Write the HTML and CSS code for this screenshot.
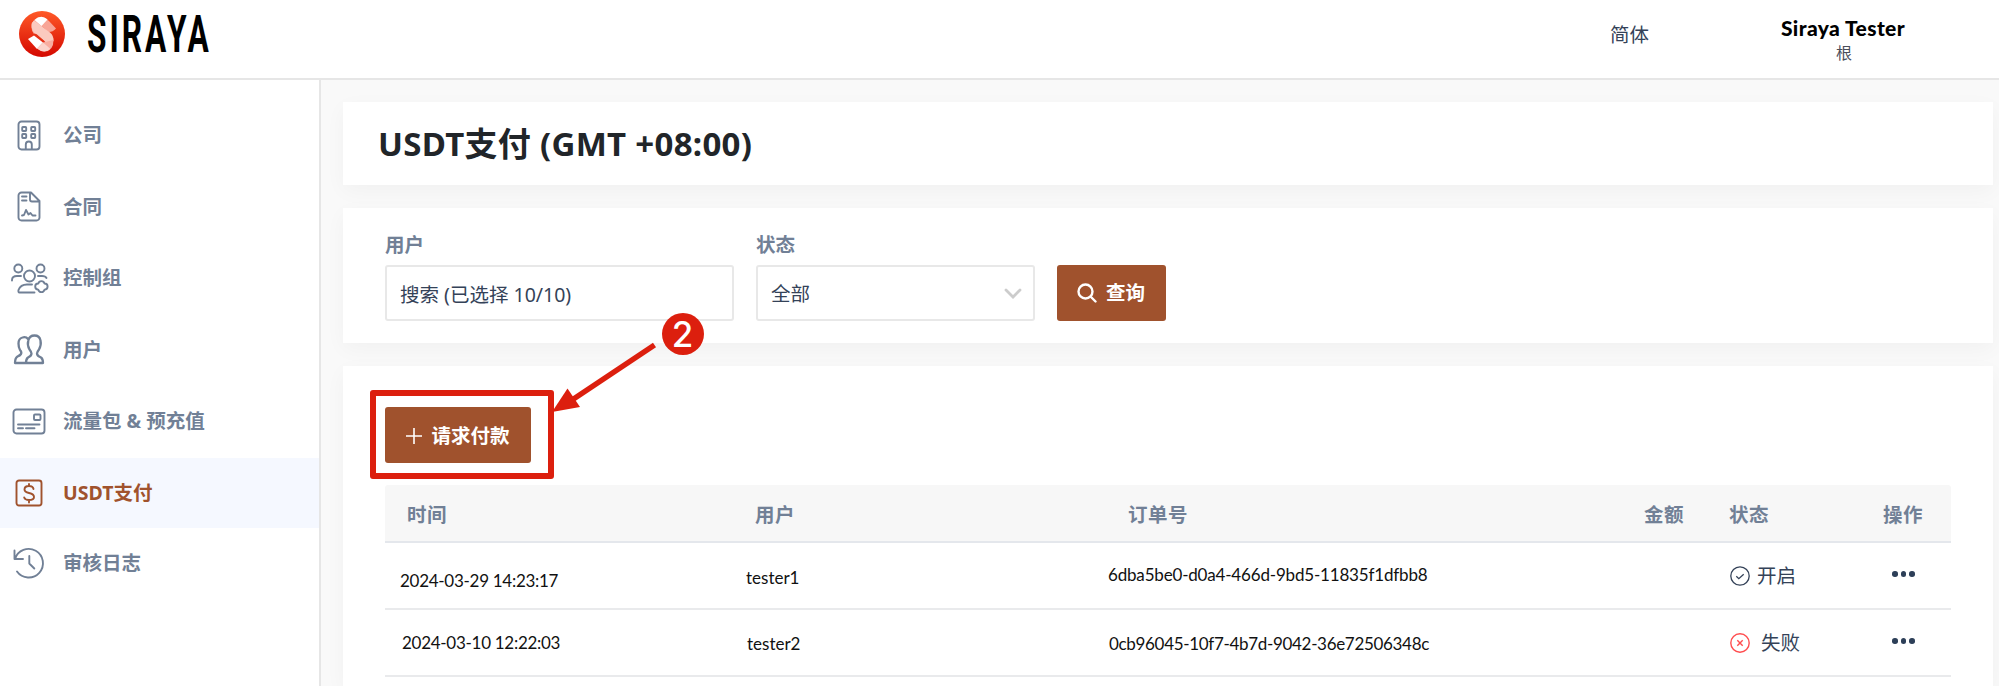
FILE: index.html
```html
<!DOCTYPE html>
<html lang="zh-CN">
<head>
<meta charset="utf-8">
<title>USDT支付</title>
<link rel="stylesheet" href="styles.css">
</head>
<body>
<header class="topbar">
  <div class="brand">
    <svg class="brand-mark" width="46" height="46" viewBox="0 0 46 46">
      <defs><linearGradient id="g" x1="0" y1="0" x2="0" y2="1"><stop offset="0" stop-color="#ff5a28"/><stop offset="1" stop-color="#d40800"/></linearGradient></defs>
      <circle cx="23" cy="23" r="23" fill="url(#g)"/>
      <path d="M15 23Q10 16 14.500 10Q18 5.500 23 6Q27 6.500 30 10L37 17.500Q34 21 29.500 21L23 15.500Z" fill="#f8a596"/>
      <path d="M15.500 9Q22 3 28.500 8.500L22.500 15L15.500 9Z" fill="#fff"/>
      <path d="M12.500 14Q12.500 21 18 24L30 34L34.500 30Q35 25 31 21.500L23 15.500L15 9.500Q12.500 11.500 12.500 14Z" fill="#fbcabf"/>
      <path d="M9 28L15 24.500L24 31.500L18 38Z" fill="#fff"/>
      <path d="M24 31.500L34.500 29Q34.500 40 25.500 40.500Q21.500 40.500 18 37.500Z" fill="#f8ada0"/>
      <path d="M24 31.500L31.500 38Q25 43 18 37.500Z" fill="#fbd3cb"/>
      <path d="M17 23.500L25 30.500" stroke="#e73516" stroke-width="1.200"/>
    </svg>
    <span class="brand-name">SIRAYA</span>
  </div>
  <div class="lang">简体</div>
  <div class="account"><div class="account-name">Siraya Tester</div><div class="account-role">根</div></div>
</header>
<div class="body">
  <nav class="sidebar">
    <a class="item"><span class="ico"><svg width="24" height="31" viewBox="0 0 24 31"><rect x="1.500" y="1.500" width="21" height="28" rx="3"/><rect x="5.200" y="7" width="4" height="4" rx=".7"/><rect x="14.200" y="7" width="4" height="4" rx=".7"/><rect x="5.200" y="14" width="4" height="4" rx=".7"/><rect x="14.200" y="14" width="4" height="4" rx=".7"/><path d="M8.800 29v-4.500a3 3 0 0 1 6 0V29"/></svg></span>公司</a>
    <a class="item"><span class="ico"><svg width="24" height="31" viewBox="0 0 24 31"><path d="M4.500 1.500H14l8.500 8.500v16.500a3 3 0 0 1-3 3h-15a3 3 0 0 1-3-3v-22a3 3 0 0 1 3-3ZM13 1.500v7q0 2 2 2h7.500M5 5.500h4.500M5 9.500h4.500M5 24.500l2-.500 2-5 2.500 4.500 2-1.500 2 2.500h3"/></svg></span>合同</a>
    <a class="item"><span class="ico"><svg width="38" height="31" viewBox="0 0 38 31"><circle cx="8.300" cy="5.500" r="4"/><circle cx="30.500" cy="5.500" r="4"/><circle cx="19.500" cy="13" r="5.500"/><path d="M2 17.500v-.500q0-4 5-4h4M28 13h4q3.500 0 4.500 2M24.500 29.500H9.500q-1.500 0-1-2.500Q10.500 21.500 17 21.500h5M28.300 20.500a3.200 3.200 0 0 1 6.200 0 3.100 3.100 0 0 1 0 6.200 3.200 3.200 0 0 1-6.200 0 3.100 3.100 0 0 1 0-6.200Z"/></svg></span>控制组</a>
    <a class="item"><span class="ico"><svg class="bold" width="32" height="31" viewBox="0 0 32 31"><path d="M15 5q-2-2.500-5.500-1.500-4 1-4 6 0 4 1.500 6.500 2 2 1 4-1 1.500-3.500 2.500-2.500 1.500-2.500 6.500h28q0-4-2-5.500-4-1.500-4-4 0-1.500 2-4 2.500-4.500 1.500-9-1-5-6-5t-6.200 5q-1.300 4.500 1.200 9 2 2.500 2 4 0 2.500-3.500 4-2 1.500-2 5.500"/></svg></span>用户</a>
    <a class="item"><span class="ico"><svg width="34" height="27" viewBox="0 0 34 27"><rect x="1.500" y="1.500" width="31" height="24" rx="3"/><rect x="22" y="6.500" width="6.500" height="5.500" rx="1"/><path d="M6 16.500h21.500M6 20.200h5M14 20.200h8.500"/></svg></span>流量包 &amp; 预充值</a>
    <a class="item active"><span class="ico"><svg width="28" height="28" viewBox="0 0 28 28"><rect x="1.500" y="1.500" width="25" height="25" rx="2.500"/><path d="M18.500 10q-.500-3-4.500-3-4.500 0-4.500 3.500 0 2.500 4.500 3.500 5 1 5 4t-5 3q-4 0-4.800-2.500M14 5v2M14 21v2.500"/></svg></span>USDT支付</a>
    <a class="item"><span class="ico"><svg width="32" height="32" viewBox="0 0 32 32"><path d="M2 12a14.300 14.300 0 1 1 2 12.500M1.500 3.500v8.500h8.500M16.300 9v7.500l5 5"/></svg></span>审核日志</a>
  </nav>
  <main class="main">
    <section class="card title-card"><h1>USDT支付 (GMT +08:00)</h1></section>
    <section class="card filters">
      <div class="field user"><label>用户</label><div class="box">搜索 (已选择 10/10)</div></div>
      <div class="field state"><label>状态</label><div class="box">全部<svg width="18" height="12" viewBox="0 0 18 12"><path d="M2 2l7 7 7-7" fill="none" stroke="#ccc" stroke-width="2.800" stroke-linecap="round"/></svg></div></div>
      <button class="btn query"><svg width="20" height="20" viewBox="0 0 20 20" fill="none" stroke="#fff" stroke-width="2.400" stroke-linecap="round"><circle cx="8.500" cy="8.500" r="7"/><path d="M14 14l4.500 4.500"/></svg>查询</button>
    </section>
    <section class="card list">
      <button class="btn request"><svg width="16" height="16" viewBox="0 0 16 16" stroke="#fff" stroke-width="1.600"><path d="M8 0v16M0 8h16"/></svg>请求付款</button>
      <div class="table">
        <div class="row head"><span>时间</span><span>用户</span><span>订单号</span><span>金额</span><span>状态</span><span>操作</span></div>
        <div class="row first"><span class="date">2024-03-29 14:23:17</span><span class="who">tester1</span><span class="order">6dba5be0-d0a4-466d-9bd5-11835f1dfbb8</span><span></span><span class="status"><svg width="20" height="20" viewBox="0 0 20 20" fill="none" stroke="#344258" stroke-width="1.300"><circle cx="10" cy="10" r="9.200"/><path d="M6.300 10.300l2.500 2.400 4.900-4.500"/></svg>开启</span><span class="dots"><i></i><i></i><i></i></span></div>
        <div class="row second"><span class="date">2024-03-10 12:22:03</span><span class="who">tester2</span><span class="order">0cb96045-10f7-4b7d-9042-36e72506348c</span><span></span><span class="status"><svg width="20" height="20" viewBox="0 0 20 20" fill="none" stroke="#ff4d4f" stroke-width="1.400"><circle cx="10" cy="10" r="9.200"/><path d="M7.300 7.300l5.400 5.400M12.700 7.300l-5.400 5.400"/></svg>失败</span><span class="dots"><i></i><i></i><i></i></span></div>
      </div>
    </section>
  </main>
</div>
<div class="callout"></div>
<svg class="arrow" width="110" height="80" viewBox="0 0 110 80"><path d="M102.500 5L20 60" stroke="#dc1f0e" stroke-width="5.500"/><path d="M0 72L15.500 48.500L28 67Z" fill="#dc1f0e"/></svg>
<div class="step">2</div>
</body>
</html>
```
FILE: styles.css
```css
* { box-sizing: border-box; }
body {
  margin: 0;
  height: 686px;
  overflow: hidden;
  background: #fff;
  color: #344258;
  font: 19.5px/28px "Noto Sans", "Noto Sans CJK SC", sans-serif;
}
.topbar {
  display: flex;
  height: 80px;
  border-bottom: 2px solid #e6e6e6;
}
.brand { display: flex; width: 1610px; padding: 11px 0 0 19px; }
.brand-mark { flex: none; }
.brand-name {
  margin: 0 0 0 22px;
  font: 700 51px/47px Roboto, sans-serif;
  letter-spacing: 4.8px;
  color: #000;
  transform: scaleX(.62);
  transform-origin: 0 0;
}
.lang { width: 140px; padding-top: 21px; }
.account { width: 186px; padding-top: 15px; text-align: center; }
.account-name { font: 900 21px/26px Lato, sans-serif; letter-spacing: .4px; color: #000; }
.account-role { font-size: 16px; line-height: 24px; padding-left: 2px; color: #4a4e5a; }
.body { display: flex; height: 606px; }
.sidebar {
  flex: none;
  width: 321px;
  padding-top: 20px;
  border-right: 2px solid #e6e6e6;
}
.item {
  display: flex;
  align-items: center;
  height: 70px;
  margin-bottom: 1.6px;
  color: #718096;
  font-weight: 700;
}
.item:last-child { margin-top: -1.5px; }
.ico { display: flex; justify-content: center; width: 58px; margin-right: 5px; }
.ico svg { fill: none; stroke: currentColor; stroke-width: 1.9; stroke-linecap: round; stroke-linejoin: round; overflow: visible; }
.ico .bold { stroke-width: 2.3; }
.active { background: #f5f8ff; color: #a0522d; }
.main {
  flex: 1;
  display: flex;
  flex-direction: column;
  gap: 23px;
  padding: 22px 6px 0 22px;
  background: #f9f9f9;
}
.card { background: #fff; box-shadow: 0 6px 20px rgba(0, 0, 0, .035); }
.title-card { display: flex; align-items: center; height: 83px; padding-left: 35px; flex: none; }
h1 { margin: 0; font-size: 33px; line-height: 44px; letter-spacing: .3px; color: #212529; }
.filters { display: flex; align-items: flex-start; height: 135px; padding: 23px 0 0 42px; flex: none; }
.field label { display: block; height: 34px; color: #718096; font-weight: 700; line-height: 28px; }
.box {
  display: flex;
  align-items: center;
  justify-content: space-between;
  height: 56px;
  padding: 3px 11px 0 13px;
  border: 2px solid #e8e8e8;
  border-radius: 3px;
}
.user { width: 349px; margin-right: 22px; }
.state { width: 278.5px; margin-right: 22px; }
.state .box { padding-top: 1px; }
.btn {
  display: flex;
  align-items: center;
  justify-content: center;
  height: 56px;
  padding: 0;
  border: 0;
  border-radius: 3px;
  background: #a0522d;
  color: #fff;
  font: inherit;
  font-weight: 700;
}
.query { width: 109px; gap: 9px; margin-top: 34px; }
.list { flex: 1; padding: 41px 42px 0 42px; }
.request { width: 146px; gap: 9px; padding-top: 1px; }
.table { margin-top: 22px; }
.row {
  display: grid;
  grid-template-columns: 361px 362px 500px 105px 155px 1fr;
  align-items: center;
  height: 67px;
  border-bottom: 2px solid #e9eaec;
}
.head {
  grid-template-columns: 348px 373px 516px 85px 154px 1fr;
  height: 58px;
  padding: 3px 0 0 22px;
  background: #f7f7f7;
  border-bottom-color: #e4e7ec;
  border-radius: 3px 3px 0 0;
  color: #718096;
  font-weight: 700;
  letter-spacing: .5px;
}
.date, .who, .order { font: 17px/24px Lato, sans-serif; color: #111; white-space: nowrap; }
.date { padding-left: 15px; letter-spacing: -.28px; }
.first .date { padding-top: 10px; }
.first .who { padding-top: 4px; }
.order { letter-spacing: -.18px; }
.first .order { margin-top: -2px; }
.second .date { padding-left: 17px; }
.second .who, .second .order { padding-left: 1px; padding-top: 2px; }
.second .order { letter-spacing: -.32px; }
.status { display: flex; align-items: center; gap: 7px; margin-left: 17px; }
.second .status { gap: 11px; padding-top: 1px; }
.dots { display: flex; gap: 3px; margin: -3px 0 0 24px; }
.dots i { width: 5.6px; height: 5.6px; border-radius: 50%; background: #2d3f58; }
.callout {
  position: absolute;
  left: 370px;
  top: 390px;
  width: 184px;
  height: 89px;
  border: 6px solid #dc1f0e;
  border-radius: 3px;
}
.arrow { position: absolute; left: 552px; top: 340px; }
.step {
  position: absolute;
  left: 661.5px;
  top: 312.5px;
  width: 42px;
  height: 42px;
  border-radius: 50%;
  background: #dc1f0e;
  color: #fff;
  font: 500 35px/43px Inter, sans-serif;
  text-align: center;
}
```
